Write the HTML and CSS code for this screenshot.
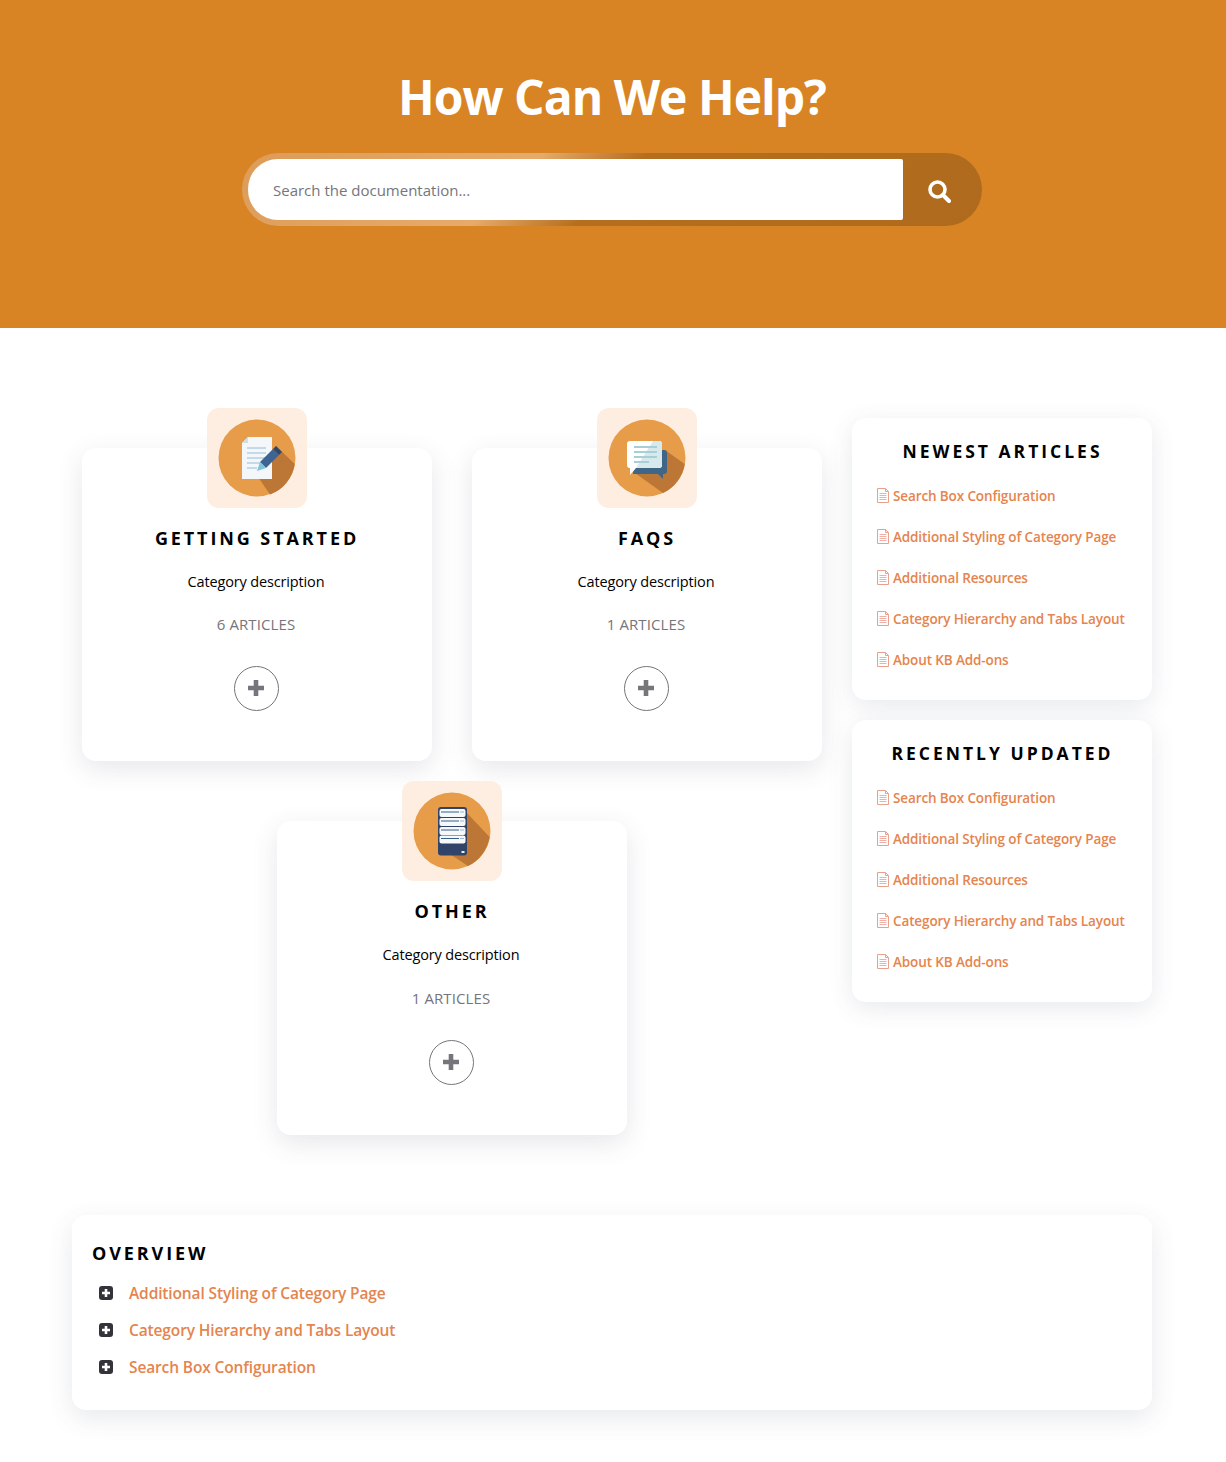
FILE: index.html
```html
<!DOCTYPE html>
<html lang="en">
<head>
<meta charset="utf-8">
<title>How Can We Help?</title>
<link rel="stylesheet" href="styles.css">
</head>
<body>
<svg class="defs" width="0" height="0" aria-hidden="true">
  <defs>
    <symbol id="doc" viewBox="0 0 12 15">
      <path d="M.5.5h8l3 3v11H.5z" fill="#fff" stroke="#e9a08f"/>
      <path d="M8.500.5v3h3" fill="none" stroke="#e9a08f"/>
      <path d="M2.500 5.500h7M2.500 7.500h7M2.500 9.500h7M2.500 11.500h7" stroke="#eeb0a6"/>
    </symbol>
    <symbol id="plus-box" viewBox="0 0 14 14">
      <rect width="14" height="14" rx="3" fill="#33333b"/>
      <path d="M7 3v8M3 7h8" stroke="#fff" stroke-width="2.600"/>
    </symbol>
    <symbol id="plus" viewBox="0 0 16 16">
      <path d="M8 0v16M0 8h16" stroke="#75757b" stroke-width="4.600"/>
    </symbol>
  </defs>
</svg>

<header class="hero">
  <h1 class="hero-title">How Can We Help?</h1>
  <form class="search">
    <input class="search-input" type="text" placeholder="Search the documentation...">
    <button class="search-btn" type="button" aria-label="Search">
      <svg width="24" height="24" viewBox="0 0 24 24"><circle cx="10.500" cy="10.500" r="7.500" fill="none" stroke="#fff" stroke-width="3.600"/><path d="M16 16l6 6" stroke="#fff" stroke-width="4" stroke-linecap="round"/></svg>
    </button>
  </form>
</header>

<main class="page">
  <div class="top">
    <section class="cats">
      <article class="cat">
        <div class="cat-icon">
          <svg width="78" height="78" viewBox="0 0 78 78">
            <circle cx="39" cy="39" r="38.500" fill="#e69c48"/>
            <path d="M58 27L76.700 45A38.500 38.500 0 0 1 52 75.500L40 58z" fill="#bc7636"/>
            <path d="M30 18h24v42H24V24z" fill="#f4f7f9"/>
            <path d="M30 18v6h-6z" fill="#cfdde6"/>
            <path d="M29 29h19M29 34h19M29 39h19M29 44h14M29 49h10" stroke="#b5cfe4" stroke-width="1.600"/>
            <path d="M42 43L55 30l6 6-13 13z" fill="#3d6593"/>
            <path d="M42 43l-3 9 9-3z" fill="#7fc4d8"/>
            <path d="M55 30l3-3 6 6-3 3z" fill="#2d4a6e"/>
          </svg>
        </div>
        <h2 class="cat-title">GETTING STARTED</h2>
        <p class="cat-desc">Category description</p>
        <p class="cat-count">6 ARTICLES</p>
        <span class="cat-more"><svg class="cat-plus" width="16" height="16"><use href="#plus"/></svg></span>
      </article>

      <article class="cat">
        <div class="cat-icon">
          <svg width="78" height="78" viewBox="0 0 78 78">
            <circle cx="39" cy="39" r="38.500" fill="#e69c48"/>
            <path d="M57 31L76.700 45A38.500 38.500 0 0 1 55 74L27 54z" fill="#bc7636"/>
            <path d="M27 31h29a3 3 0 0 1 3 3v18a3 3 0 0 1-3 3h-1v5l-5-5H25z" fill="#3f6587"/>
            <path d="M22 22h29a3 3 0 0 1 3 3v21a3 3 0 0 1-3 3H28l-6 7v-7a3 3 0 0 1-3-3V25a3 3 0 0 1 3-3z" fill="#fff"/>
            <path d="M45 22h6a3 3 0 0 1 3 3v21a3 3 0 0 1-3 3H28z" fill="#d8e9ee"/>
            <path d="M26 28h23M26 33h23M26 38h23M26 43h15" stroke="#a9cfd6" stroke-width="1.800"/>
          </svg>
        </div>
        <h2 class="cat-title">FAQS</h2>
        <p class="cat-desc">Category description</p>
        <p class="cat-count">1 ARTICLES</p>
        <span class="cat-more"><svg class="cat-plus" width="16" height="16"><use href="#plus"/></svg></span>
      </article>

      <article class="cat">
        <div class="cat-icon">
          <svg width="78" height="78" viewBox="0 0 78 78">
            <circle cx="39" cy="39" r="38.500" fill="#e69c48"/>
            <path d="M53 20L76.500 45A38.500 38.500 0 0 1 55 74L34 60z" fill="#bc7636"/>
            <rect x="25" y="15" width="29" height="48.500" rx="3" fill="#2f4468"/>
            <g fill="#f6f8fa">
              <rect x="26.500" y="17" width="26" height="8" rx="2"/>
              <rect x="26.500" y="26" width="26" height="8" rx="2"/>
              <rect x="26.500" y="35" width="26" height="8" rx="2"/>
              <rect x="26.500" y="43.500" width="26" height="8" rx="2"/>
            </g>
            <path d="M28 20h18M28 29h18M28 38h18M28 46.500h18" stroke="#34608c" stroke-width="1.200"/>
            <path d="M47 20h4M47 29h4M47 38h4M47 46.500h4" stroke="#9fb3c4" stroke-width="1.200"/>
            <rect x="48.500" y="59" width="3" height="2" fill="#e8eef2"/>
          </svg>
        </div>
        <h2 class="cat-title">OTHER</h2>
        <p class="cat-desc">Category description</p>
        <p class="cat-count">1 ARTICLES</p>
        <span class="cat-more"><svg class="cat-plus" width="16" height="16"><use href="#plus"/></svg></span>
      </article>
    </section>

    <aside class="side">
      <section class="widget">
        <h3 class="widget-title">NEWEST ARTICLES</h3>
        <ul class="widget-list">
          <li><a class="widget-link" href="#"><svg width="12" height="15"><use href="#doc"/></svg>Search Box Configuration</a></li>
          <li><a class="widget-link" href="#"><svg width="12" height="15"><use href="#doc"/></svg>Additional Styling of Category Page</a></li>
          <li><a class="widget-link" href="#"><svg width="12" height="15"><use href="#doc"/></svg>Additional Resources</a></li>
          <li><a class="widget-link" href="#"><svg width="12" height="15"><use href="#doc"/></svg>Category Hierarchy and Tabs Layout</a></li>
          <li><a class="widget-link" href="#"><svg width="12" height="15"><use href="#doc"/></svg>About KB Add-ons</a></li>
        </ul>
      </section>
      <section class="widget">
        <h3 class="widget-title">RECENTLY UPDATED</h3>
        <ul class="widget-list">
          <li><a class="widget-link" href="#"><svg width="12" height="15"><use href="#doc"/></svg>Search Box Configuration</a></li>
          <li><a class="widget-link" href="#"><svg width="12" height="15"><use href="#doc"/></svg>Additional Styling of Category Page</a></li>
          <li><a class="widget-link" href="#"><svg width="12" height="15"><use href="#doc"/></svg>Additional Resources</a></li>
          <li><a class="widget-link" href="#"><svg width="12" height="15"><use href="#doc"/></svg>Category Hierarchy and Tabs Layout</a></li>
          <li><a class="widget-link" href="#"><svg width="12" height="15"><use href="#doc"/></svg>About KB Add-ons</a></li>
        </ul>
      </section>
    </aside>
  </div>

  <section class="overview">
    <h3 class="overview-title">OVERVIEW</h3>
    <ul class="overview-list">
      <li class="overview-item"><svg width="14" height="14"><use href="#plus-box"/></svg><a class="overview-link" href="#">Additional Styling of Category Page</a></li>
      <li class="overview-item"><svg width="14" height="14"><use href="#plus-box"/></svg><a class="overview-link" href="#">Category Hierarchy and Tabs Layout</a></li>
      <li class="overview-item"><svg width="14" height="14"><use href="#plus-box"/></svg><a class="overview-link" href="#">Search Box Configuration</a></li>
    </ul>
  </section>
</main>
</body>
</html>
```
FILE: styles.css
```css
* { box-sizing: border-box; }
html, body { margin: 0; padding: 0; }
body {
  background: #fff;
  color: #000;
  font-family: "Open Sans", "Noto Sans", sans-serif;
  height: 1462px;
  overflow: hidden;
}
.defs { position: absolute; }

.hero {
  height: 328px;
  background: #d88424;
  padding: 67px 2px 0 0;
  display: flex;
  flex-direction: column;
  align-items: center;
}
.hero-title {
  margin: 0 0 26px;
  height: 60px;
  line-height: 60px;
  font-size: 48px;
  font-weight: 700;
  letter-spacing: -1px;
  color: #fff;
}
.search {
  width: 740px;
  height: 73px;
  padding: 6px 0 6px 6px;
  border-radius: 37px;
  display: flex;
  background: linear-gradient(135deg, #dd9c58 0%, #e6aa6a 37%, #b46e1e 50%, #af6a1d 100%);
}
.search-input {
  width: 655px;
  height: 61px;
  border: 0;
  outline: 0;
  padding: 0 24px 0 25px;
  background: #fff;
  border-radius: 30px 2px 2px 30px;
  font: 15px "Open Sans", sans-serif;
  color: #666;
}
.search-input::placeholder { color: #75757b; opacity: 1; }
.search-btn {
  flex: 1;
  background: none;
  border: 0;
  padding: 2px 8px 0 0;
  display: flex;
  align-items: center;
  justify-content: center;
}

.page { width: 1080px; margin-left: 72px; }
.top { display: flex; gap: 20px; padding-top: 80px; }

.cats {
  width: 760px;
  padding: 0 10px;
  display: flex;
  flex-wrap: wrap;
  justify-content: center;
  gap: 20px 40px;
  align-content: flex-start;
}
.cat {
  width: 350px;
  height: 353px;
  padding-top: 40px;
  display: flex;
  flex-direction: column;
  align-items: center;
  border-radius: 14px;
  position: relative;
}
.cat:last-child { height: 354px; }
.cat::before {
  content: "";
  position: absolute;
  inset: 40px 0 0;
  border-radius: 14px;
  box-shadow: 0 8px 26px rgba(60, 70, 90, .13);
  background: #fff;
}
.cat > * { position: relative; }
.cat-icon {
  width: 100px;
  height: 100px;
  margin-top: -40px;
  background: #feeee2;
  border-radius: 12px;
  display: flex;
  align-items: center;
  justify-content: center;
}
.cat-title {
  margin: 17px 0 0;
  height: 26px;
  line-height: 26px;
  font-size: 18px;
  font-weight: 700;
  letter-spacing: 2.900px;
}
.cat-desc {
  margin: 20px 2px 0 0;
  line-height: 22px;
  font-size: 14.500px;
  letter-spacing: -.15px;
}
.cat-count {
  margin: 19px 2px 0 0;
  line-height: 24px;
  font-size: 15px;
  color: #75757b;
  letter-spacing: .1px;
}
.cat:last-child .cat-count { margin-top: 20px; }
.cat-more {
  margin: 30px 2px 0 0;
  width: 45px;
  height: 45px;
  padding-bottom: 2px;
  border: 1px solid #75757b;
  border-radius: 50%;
  display: flex;
  align-items: center;
  justify-content: center;
}

.side { width: 300px; padding-top: 10px; display: flex; flex-direction: column; gap: 20px; }
.widget {
  height: 282px;
  padding: 20px 24px 0 25px;
  background: #fff;
  border-radius: 14px;
  box-shadow: 0 6px 24px rgba(60, 70, 90, .12);
}
.widget-title {
  margin: 0;
  height: 26px;
  line-height: 26px;
  text-align: center;
  font-size: 17.500px;
  font-weight: 700;
  letter-spacing: 3px;
  white-space: nowrap;
}
.widget-list { list-style: none; margin: 21px 0 0; padding: 0; display: flex; flex-direction: column; gap: 19px; }
.widget-link {
  height: 22px;
  display: flex;
  align-items: center;
  gap: 4px;
  white-space: nowrap;
  font-size: 13.500px;
  font-weight: 600;
  letter-spacing: -.12px;
  color: #e5844e;
  text-decoration: none;
}
.widget-link svg { margin-top: -2px; }

.overview {
  margin-top: 80px;
  height: 195px;
  padding: 25px 20px 0;
  background: #fff;
  border-radius: 14px;
  box-shadow: 0 8px 26px rgba(60, 70, 90, .12);
}
.overview-title {
  margin: 0;
  height: 26px;
  line-height: 26px;
  font-size: 18px;
  font-weight: 700;
  letter-spacing: 2.900px;
}
.overview-list { list-style: none; margin: 15px 0 0; padding: 0 0 0 7px; display: flex; flex-direction: column; gap: 13px; }
.overview-item { height: 24px; display: flex; align-items: center; gap: 16px; }
.overview-link {
  font-size: 15.500px;
  font-weight: 600;
  letter-spacing: -.13px;
  color: #e5844e;
  text-decoration: none;
}
```
